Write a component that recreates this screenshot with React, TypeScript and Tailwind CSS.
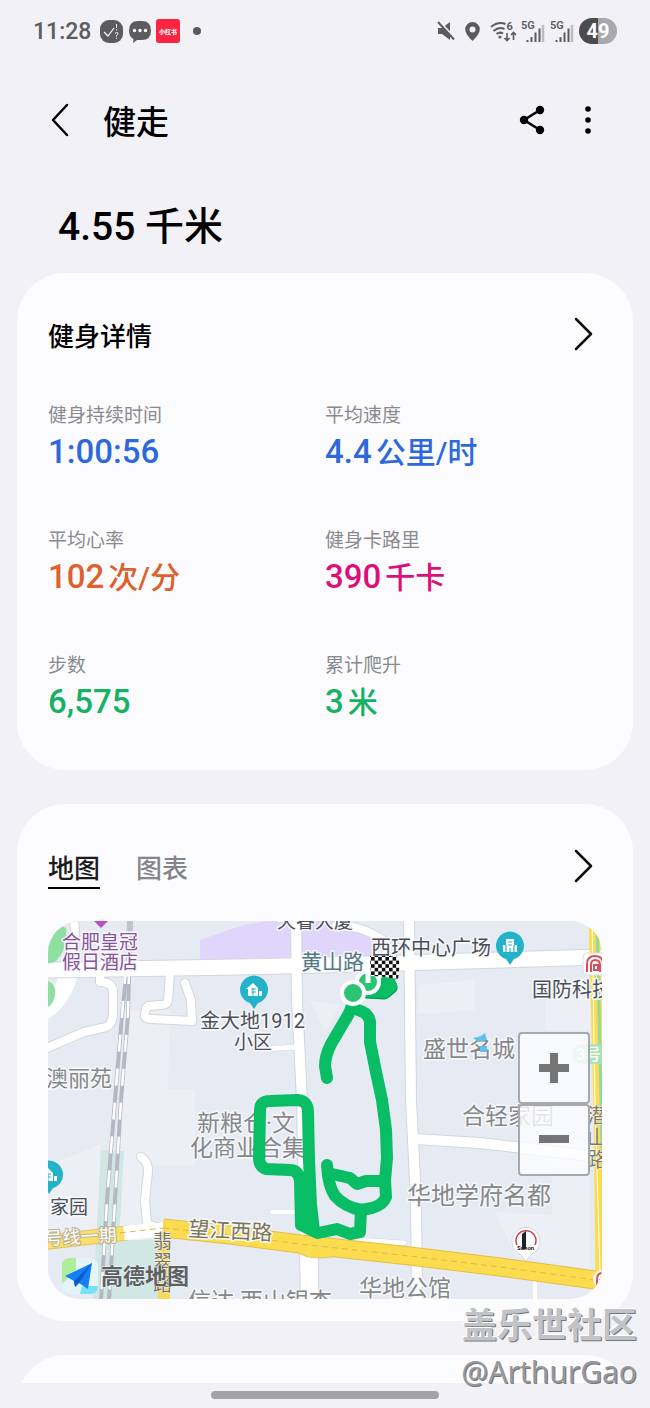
import React from 'react'

const stats = [
  { label: '健身持续时间', value: '1:00:56', unit: '', color: 'text-[#2d69dc]' },
  { label: '平均速度', value: '4.4', unit: '公里/时', color: 'text-[#2d69dc]' },
  { label: '平均心率', value: '102', unit: '次/分', color: 'text-[#df602d]' },
  { label: '健身卡路里', value: '390', unit: '千卡', color: 'text-[#dd0f78]' },
  { label: '步数', value: '6,575', unit: '', color: 'text-[#16b164]' },
  { label: '累计爬升', value: '3', unit: '米', color: 'text-[#16b164]' },
]

const roads = [
  'M47 970 L240 967 L400 963 L603 957',
  'M296 915 L297 1000 L302 1100 L306 1300',
  'M409 915 L411 1100 L416 1200 L417 1300',
  'M415 1139 L480 1143 L590 1156',
]

const smallRoads = [
  'M73 915 Q78 940 70 965',
  'M100 975 V982 Q113 982 113 992 V1012 Q113 1027 102 1028 L84 1032 L47 1048',
  'M170 972 L168 1001 Q167 1005 160 1005 L148 1006 Q145 1008 145 1016 Q145 1019 152 1019 L192 1021 L191 1000 L185 983',
  'M141 1157 Q149 1163 148 1172 L145 1200 L147 1224 L163 1229',
  'M336 926 Q360 924 386 942',
  'M314 1240 L314 1300',
]

const tinyRoads = [
  'M262 1049 L297 1047',
  'M272 1212 L300 1212',
  'M355 1240 L404 1243',
  'M535 1281 V1300',
]

const mainRoad = 'M163 1228 L230 1235 L300 1244 L410 1256 L500 1267 L603 1281'

const grayLabels = [
  { text: '盛世名城', x: 423, y: 1057, size: 23 },
  { text: '澳丽苑', x: 46, y: 1086, size: 22 },
  { text: '新粮仓·文', x: 197, y: 1131, size: 23 },
  { text: '化商业合集', x: 190, y: 1156, size: 23 },
  { text: '合轻家园', x: 462, y: 1124, size: 23 },
  { text: '华地学府名都', x: 407, y: 1204, size: 24 },
  { text: '华地公馆', x: 359, y: 1296, size: 23 },
  { text: '信达·西山银杏', x: 188, y: 1309, size: 23 },
]

const darkLabels = [
  { text: '天睿大厦', x: 277, y: 928, size: 19 },
  { text: '西环中心广场', x: 371, y: 955, size: 20 },
  { text: '国防科技', x: 532, y: 997, size: 20 },
  { text: '金大地1912', x: 200, y: 1028, size: 20 },
  { text: '小区', x: 234, y: 1049, size: 19 },
  { text: '家园', x: 50, y: 1214, size: 19 },
]

const track = [
  'M353 1003 Q350 1013 344 1022 L331 1044 Q325 1056 325 1066 L327 1078',
  'M353 1008 L363 1012 Q369 1015 370 1022 L370 1042 L376 1072 L382 1100 L386 1130 L387 1158 L385 1180 L386 1197 Q383 1205 372 1208 L361 1210 Q345 1207 335 1196 Q328 1186 327 1165',
  'M332 1174 L350 1178 L357 1184 L366 1181 L385 1181',
  'M361 1210 L360 1232 L350 1234 L337 1229 L318 1233 L309 1229 L301 1225 L300 1180 Q298 1170 290 1170 L266 1169 Q259 1166 259 1158 L260 1110 Q260 1101 270 1101 L298 1100 Q308 1101 308 1112 L309 1160 L311 1205 L314 1231',
]

function StatusBar() {
  return (
    <div className="flex h-[62px] items-center justify-between pr-[33px] pl-[33px] text-[#5c5c5e]">
      <div className="flex items-center">
        <span className="mr-[9px] pt-0.5 text-[23px] font-medium">11:28</span>
        <svg width="23" height="23" viewBox="0 0 23 23" className="mr-[6px]">
          <rect width="23" height="23" rx="9" fill="#5c5c5e" />
          <path d="M4 12 L8 16 L14 8" fill="none" stroke="#fff" strokeWidth="1.2" />
          <path d="M16.5 4 V8 M16.5 9.3 V10.3 M15 13.5 Q16.5 11.5 18 13.2 Q18 14.6 16.5 15.4 V16.6 M16.5 17.8 V18.8" fill="none" stroke="#fff" />
        </svg>
        <svg width="22" height="23" viewBox="0 0 22 23" className="mr-[5px]">
          <path d="M9 1 H13 Q22 1 22 10.5 Q22 20 13 20 H8 L4 23 L4.500 19 Q0 17 0 10.500 Q0 1 9 1Z" fill="#5c5c5e" />
          <circle cx="5.500" cy="10.500" r="1.700" fill="#fff" />
          <circle cx="11" cy="10.500" r="1.700" fill="#fff" />
          <circle cx="16.500" cy="10.500" r="1.700" fill="#fff" />
        </svg>
        <svg width="24" height="24" viewBox="0 0 24 24" className="mr-[13px]">
          <rect width="24" height="24" rx="3" fill="#fb2442" />
          <text x="12" y="14.500" textAnchor="middle" fontSize="6" fontWeight="900" fill="#fff">小红书</text>
        </svg>
        <span className="h-[8px] w-[8px] rounded-full bg-[#5c5c5e]" />
      </div>
      <div className="flex items-center">
        <svg width="19" height="20" viewBox="0 0 19 20" className="mr-[9px]">
          <path d="M1 7 H5 L13 1 V19 L5 13 H1Z" fill="#5c5c5e" />
          <path d="M2 0 L18 17" stroke="#f1f1f6" strokeWidth="2" />
          <path d="M1 1 L17 18.500" stroke="#5c5c5e" strokeWidth="2" />
        </svg>
        <svg width="15" height="19" viewBox="0 0 15 19" className="mr-[10px]">
          <path d="M7.500 0 A7.300 7.300 0 0 1 14.800 7.300 Q14.800 12 7.500 19 Q0.200 12 0.200 7.300 A7.300 7.300 0 0 1 7.500 0Z" fill="#5c5c5e" />
          <circle cx="7.500" cy="7.500" r="3" fill="#f1f1f6" />
        </svg>
        <svg width="28" height="21" viewBox="0 0 28 21" className="mr-[3px]" fill="none" stroke="#5c5c5e" strokeWidth="2">
          <path d="M1 6 Q8 0 15.500 3 M3.500 10 Q9 5.500 14.500 8 M6.500 13 Q10 10.500 13 12.500" />
          <circle cx="10" cy="16" r="0.600" />
          <path d="M17 12 V19 M14.500 17 L17 19.500 L19.500 17 M23.500 19 V12 M21 14 L23.500 11.500 L26 14" strokeWidth="1.600" />
          <text x="16.500" y="9" fontSize="11" fontWeight="700" fill="#5c5c5e" stroke="none">6</text>
        </svg>
        {[1, 2].map((sim) => (
          <svg key={sim} width="24" height="24" viewBox="0 -2 24 24" className="mr-[5px]">
            <text x="0" y="8" fontSize="11" fontWeight="600" fill="#5c5c5e">5G</text>
            <path d="M6.500 21 V19 M10.500 21 V16 M14.500 21 V11.500 M18.500 21 V7.500" stroke="#5c5c5e" strokeWidth="2" />
            <path d="M22 21 V4" stroke="#bcbcc0" strokeWidth="2.500" />
          </svg>
        ))}
        <div className="flex h-[26px] w-[38px] items-center justify-center rounded-full bg-linear-to-r from-[#4c4c4e] from-50% to-[#a9a9ad] to-50% text-[20px] font-bold text-white">
          49
        </div>
      </div>
    </div>
  )
}

function Chevron() {
  return (
    <svg width="20" height="34" viewBox="0 0 20 34" fill="none" stroke="#111" strokeWidth="2.500" strokeLinecap="round" strokeLinejoin="round">
      <path d="M2 2 L17 17 L2 32" />
    </svg>
  )
}

function Pin({ x, y, tall }: { x: number; y: number; tall?: boolean }) {
  return (
    <g transform={`translate(${x} ${y})`}>
      <path d="M0 19 L-4 13 A14 14 0 1 1 4 13Z" fill="#22b3cb" />
      {tall ? (
        <>
          <path d="M-7 -1 H-4 V-7 H4 V-1 H7 V6 H-7Z" fill="#fff" />
          <path d="M-2 -4 H2 M-2 -1 H2 M-4 -1 V6 M4 -1 V6 M0 2 V6" stroke="#22b3cb" strokeWidth="1.200" />
        </>
      ) : (
        <>
          <path d="M-8 -1 L-1 -7 L4 -2 V6 H-6 V-1Z M5 1 H8 V6 H5Z" fill="#fff" />
          <path d="M-3 -1 H2 M-3 2 H2 M-1 -2 V6" stroke="#22b3cb" strokeWidth="1" />
        </>
      )}
    </g>
  )
}

function Map() {
  return (
    <svg viewBox="48 921 554 378" preserveAspectRatio="xMidYMid slice" className="h-full w-full" role="img" aria-label="地图">
      <defs>
        <pattern id="checker" width="7.200" height="7.200" patternUnits="userSpaceOnUse" x="371" y="957">
          <rect width="7.200" height="7.200" fill="#fff" />
          <path d="M0 0H3.600V3.600H0Z M3.600 3.600H7.200V7.200H3.600Z" fill="#111" />
        </pattern>
      </defs>
      <rect x="40" y="910" width="570" height="400" fill="#e6eaf3" />
      <path d="M125 1010 H170 L168 1090 H195 V1165 H150 L140 1300 H110Z M40 1165 L60 1160 L100 1145 V1230 H40Z M418 985 L475 980 V1010 L418 1014Z M545 1000 L590 990 V1030 H545Z M495 1212 L552 1215 V1140 H590 V1270 L515 1255Z M310 1000 L325 1032 L340 1005Z" fill="#eceff6" />
      <path d="M101 1150 L124 1151 L119 1240 H170 V1300 H93Z" fill="#d0e7e4" />
      <path d="M200 940 L240 926 Q262 921 291 919 V959 L200 961Z M301 919 L335 921 L370 930 L375 957 L301 959Z" fill="#e0d5fb" />

      <g fill="none" strokeLinecap="round" strokeLinejoin="round">
        <path d="M42 1012 Q62 1000 68 976" stroke="#fff" strokeWidth="18" />
        <g stroke="#d3d6dd">
          {smallRoads.map((d) => <path key={d} d={d} strokeWidth="10" />)}
          {tinyRoads.map((d) => <path key={d} d={d} strokeWidth="6" />)}
          <path d={roads[0]} strokeWidth="17" />
          {roads.slice(1).map((d) => <path key={d} d={d} strokeWidth="12" />)}
        </g>
        <g stroke="#fff">
          {smallRoads.map((d) => <path key={d} d={d} strokeWidth="8" />)}
          {tinyRoads.map((d) => <path key={d} d={d} strokeWidth="5" />)}
          <path d={roads[0]} strokeWidth="15" />
          {roads.slice(1).map((d) => <path key={d} d={d} strokeWidth="10" />)}
        </g>
      </g>
      <path d="M46 964 V940 Q54 920 66 928 Q68 950 55 962Z M46 980 Q57 984 55 995 Q53 1006 46 1008Z" fill="#8fe0a0" />

      {/* railway */}
      <g fill="none">
        <path d="M130 921 L129 960" stroke="#bec3cd" strokeWidth="6" />
        <g stroke="#b3b8c4" strokeWidth="4">
          <path d="M126 977 L122 1015 L115 1100 L107 1200 L101 1300" />
          <path d="M129 977 L128 1015 L121 1100 L115 1200 L109 1300" />
        </g>
        <g stroke="#fff" strokeWidth="2.500" strokeDasharray="17 17">
          <path d="M126 967 L122 1015 L115 1100 L107 1200 L101 1300" />
          <path d="M129 967 L128 1015 L121 1100 L115 1200 L109 1300" />
        </g>
      </g>

      {/* avenues */}
      <g fill="none">
        <path d="M164 1240 V1300" stroke="#f7da58" strokeWidth="12" />
        <path d="M40 1243 L127 1233" stroke="#e3c65f" strokeWidth="15" />
        <path d="M40 1243 L127 1233" stroke="#fbdf6a" strokeWidth="13" />
        <path d="M124 1233 L168 1229" stroke="#fff" strokeWidth="14" />
        <path d="M296 1247 Q315 1260 345 1249" stroke="#e3c65f" strokeWidth="9" />
        <path d={mainRoad} stroke="#e3bf45" strokeWidth="19" />
        <path d="M296 1247 Q315 1260 345 1249" stroke="#fbdb52" strokeWidth="7" />
        <path d={mainRoad} stroke="#fcdc4f" strokeWidth="17" />
        <path d={mainRoad} stroke="#dcb94d" strokeWidth="1" strokeDasharray="6 4" />
        <path d="M110 1234 L163 1228" stroke="#dcb94d" strokeWidth="1" strokeDasharray="6 4" />
        <path d="M594 915 L599 1110 L601 1275" stroke="#fcdc4f" strokeWidth="11" />
        <path d="M597 915 L602 1150" stroke="#8fd9a8" strokeWidth="3" />
        <path d="M592 915 L595 1100 L600 1275" stroke="#fff" strokeWidth="1" />
      </g>

      {/* labels */}
      <g stroke="#f6f8fb" strokeWidth="3" strokeLinejoin="round" paintOrder="stroke">
        <g fill="#868789">
          {grayLabels.map((l) => <text key={l.text} x={l.x} y={l.y} fontSize={l.size}>{l.text}</text>)}
        </g>
        <g fill="#4d4e55">
          {darkLabels.map((l) => <text key={l.text} x={l.x} y={l.y} fontSize={l.size}>{l.text}</text>)}
        </g>
        <text fill="#875398" fontSize="19">
          <tspan x="62" y="949">合肥皇冠</tspan>
          <tspan x="62" y="969">假日酒店</tspan>
        </text>
        <text x="301" y="969" fill="#55777f" fontSize="21">黄山路</text>
        <text x="188" y="1236" fill="#7d7655" fontSize="21" transform="rotate(3 188 1236)">望江西路</text>
        <text fill="#76705a" fontSize="19" strokeWidth="1">
          <tspan x="153" y="1248">翡</tspan>
          <tspan x="153" y="1269">翠</tspan>
          <tspan x="153" y="1291">路</tspan>
        </text>
        <text fill="#827b62" fontSize="20" strokeWidth="1">
          <tspan x="587" y="1123">潜</tspan>
          <tspan x="587" y="1145">山</tspan>
          <tspan x="587" y="1167">路</tspan>
        </text>
      </g>
      <text x="45" y="1245" fontSize="18" fill="#fff" stroke="#bbb18f" strokeWidth="2" paintOrder="stroke" transform="rotate(-3 45 1245)">号线一期</text>
      <rect x="572" y="1044" width="40" height="20" rx="10" fill="#a8dfb9" opacity="0.900" />
      <text x="576" y="1060" fontSize="16" fontWeight="500" fill="#fff">3号</text>

      <path d="M92 919 H110 L101 928Z" fill="#bb4fc4" />
      <Pin x={254} y={990} />
      <Pin x={510} y={946} tall />
      <Pin x={49} y={1175} />
      <path d="M473 1038 L481 1036 L485 1033 L487 1040 L479 1042Z M480 1046 H487 V1052 H480Z" fill="#62bff0" />

      <path d="M526 1261 L520 1254 A14 14 0 1 1 532 1254Z" fill="#fff" stroke="#d5d5d8" />
      <path d="M517 1245 A10 10 0 1 1 535 1245" fill="none" stroke="#c8484c" strokeWidth="1.500" />
      <path d="M522 1249 V1234 L526 1231 V1249Z" fill="#222" />
      <text x="517" y="1250" fontSize="6" fontWeight="700" fill="#222">Sunon</text>

      <rect x="583" y="953" width="30" height="22" rx="4" fill="#fff" stroke="#ddd" />
      <g fill="none" stroke="#d9505c" strokeWidth="2">
        <path d="M587 972 V964 Q587 956 595 956 Q603 956 603 964 V972" />
        <path d="M591 972 V965 Q591 960 595 960 Q600 960 600 965 V972" />
        <path d="M594 965 H598 V970 H594Z" />
      </g>
      <circle cx="602" cy="1279" r="9" fill="#fff" />
      <path d="M597 1285 V1279 Q597 1273 603 1273 M600 1285 V1279" fill="none" stroke="#d9505c" strokeWidth="2" />

      {/* walked route */}
      <g fill="none" stroke="#08bd64" strokeLinecap="round" strokeLinejoin="round">
        <path d="M366 991 L384 992 L390 987 L388 983" stroke="#0a9f56" strokeWidth="15" />
        <path d="M366 990 L384 991 L390 986 L387 982" strokeWidth="14" />
        {track.map((d) => <path key={d} d={d} strokeWidth="12" />)}
      </g>
      <g fill="#2bc374" stroke="#fff" strokeWidth="4">
        <circle cx="368" cy="982" r="11" />
        <circle cx="353" cy="993" r="11" />
      </g>
      <path d="M368 957 V983" stroke="#fff" strokeWidth="5" />
      <path d="M370 956 Q385 955 399 957 Q400 968 398 980 Q386 976 371 976Z" fill="url(#checker)" />

      {/* provider mark */}
      <rect x="62" y="1258" width="36" height="36" rx="8" fill="#e5f4f6" />
      <path d="M62 1284 V1266 Q62 1258 70 1258 H76 V1270Z" fill="#aeee9a" />
      <path d="M80 1294 L82 1286 H98 Q98 1294 90 1294Z" fill="#74e2fb" />
      <path d="M65 1276 L92 1263 L88 1289 L79 1283 L75 1287 L74 1281Z" fill="#167ff5" />
      <path d="M74 1281 L92 1263 L79 1283 L75 1287Z" fill="#0b5ccc" />
      <text x="101" y="1284" fontSize="22" fontWeight="700" fill="#5d6062" stroke="#eef5f5" strokeWidth="1" paintOrder="stroke">高德地图</text>
    </svg>
  )
}

function App() {
  return (
    <div className="relative flex min-h-screen flex-col overflow-hidden bg-[#f1f1f6] font-[Roboto,'Noto_Sans_CJK_SC',sans-serif] text-black">
      <StatusBar />

      <header className="flex h-[116px] items-center pr-[49px] pl-[50px]">
        <button type="button" aria-label="返回" className="mr-[33px]">
          <svg width="20" height="34" viewBox="0 0 20 34" fill="none" stroke="#000" strokeWidth="2.500" strokeLinecap="round" strokeLinejoin="round">
            <path d="M17 2 L3 17 L17 32" />
          </svg>
        </button>
        <h1 className="flex-1 pt-1.5 text-[33px] leading-[40px] font-medium">健走</h1>
        <button type="button" aria-label="分享" className="mr-[29px]">
          <svg width="28" height="30" viewBox="0 0 28 30">
            <path d="M22 5 L6 15 L22 25" fill="none" stroke="#000" strokeWidth="2.500" />
            <circle cx="22" cy="5" r="4.200" />
            <circle cx="6" cy="15" r="4.200" />
            <circle cx="22" cy="25" r="4.200" />
          </svg>
        </button>
        <button type="button" aria-label="更多">
          <svg width="26" height="30" viewBox="0 0 26 30">
            <circle cx="13" cy="4" r="2.800" />
            <circle cx="13" cy="15" r="2.800" />
            <circle cx="13" cy="26" r="2.800" />
          </svg>
        </button>
      </header>

      <p className="mb-[23px] ml-[58px] h-[72px] pt-[22px] text-[39px] leading-[54px] font-medium">4.55 千米</p>

      <main className="flex flex-col gap-[34px] px-[17px]">
        <section className="rounded-[48px] bg-[#fcfcff] px-[31px] pt-[43px] pb-[50px]">
          <div className="flex h-[36px] items-center justify-between">
            <h2 className="pt-1.5 text-[26px] font-medium">健身详情</h2>
            <button type="button" aria-label="查看健身详情" className="mr-2"><Chevron /></button>
          </div>
          <dl className="mt-[50px] grid grid-cols-2 gap-y-[57px]">
            {stats.map((s) => (
              <div key={s.label} className="h-[68px]">
                <dt className="text-[19px] leading-[28px] text-[#8a8a8e]">{s.label}</dt>
                <dd className={`mt-1 flex h-[36px] items-baseline gap-1 text-[33px] leading-[36px] font-medium ${s.color}`}>
                  {s.value}
                  {s.unit && <span className="text-[30px]">{s.unit}</span>}
                </dd>
              </div>
            ))}
          </dl>
        </section>

        <section className="rounded-[48px] bg-[#fcfcff] px-[31px] pt-[43px] pb-[22px]">
          <div className="flex h-[42px] items-start justify-between">
            <div className="flex gap-[36px] text-[26px] leading-[36px]">
              <button type="button" className="border-b-2 border-black pt-1 font-medium text-[#1b1b1e]">地图</button>
              <button type="button" className="border-b-2 border-transparent pt-1 font-medium text-[#858589]">图表</button>
            </div>
            <button type="button" aria-label="查看地图" className="mt-0.5 mr-2"><Chevron /></button>
          </div>
          <div className="relative mt-[32px] h-[378px] overflow-hidden rounded-[32px]">
            <Map />
            <div className="absolute top-[111px] right-3 flex flex-col">
              <button type="button" aria-label="放大" className="flex h-[72px] w-[72px] items-center justify-center rounded-sm border-2 border-[#a6a8ab] bg-[#fcfcff]/80">
                <svg width="30" height="30" viewBox="0 0 30 30"><path d="M0 15H30M15 0V30" stroke="#757575" strokeWidth="8" /></svg>
              </button>
              <button type="button" aria-label="缩小" className="flex h-[72px] w-[72px] items-center justify-center rounded-sm border-2 border-[#a6a8ab] bg-[#fcfcff]/80">
                <svg width="30" height="30" viewBox="0 0 30 30"><path d="M0 14H30" stroke="#757575" strokeWidth="8" /></svg>
              </button>
            </div>
          </div>
        </section>

        <section className="h-[28px] overflow-hidden">
          <div className="h-[120px] rounded-[48px] bg-[#fcfcff]" />
        </section>
      </main>

      <footer className="flex h-[25px] justify-center pt-2">
        <span className="h-2 w-[228px] rounded-full bg-[#a3a2a8]" />
      </footer>

      <div className="absolute right-[13px] bottom-[14px] text-right text-[#c2c3c6]">
        <p className="text-[35px] leading-[46px] font-bold [text-shadow:-1px_-1px_0_#fff,1px_1px_0_#77787b]">盖乐世社区</p>
        <p className="font-['Noto_Sans'] text-[30px] leading-[44px] text-[#96979a] [text-shadow:-1px_-1px_0_#fff,1px_1px_0_#77787b]">@ArthurGao</p>
      </div>
    </div>
  )
}

export default App
